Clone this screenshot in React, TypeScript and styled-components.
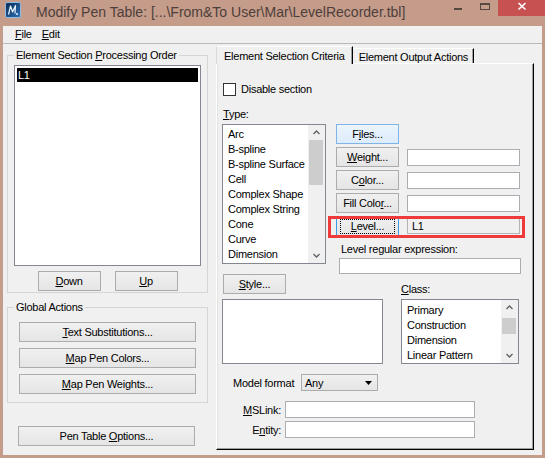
import React from 'react';
import styled, { createGlobalStyle } from 'styled-components';

const GlobalStyle = createGlobalStyle`
  html, body { margin: 0; padding: 0; }
  body {
    font-family: "Liberation Sans", Arial, sans-serif;
    font-size: 11px;
    letter-spacing: -0.25px;
    color: #000;
    background: #fff;
  }
  * { box-sizing: border-box; }
`;

const Window = styled.div`
  width: 545px;
  height: 458px;
  background: #c59b8a;
  display: flex;
  flex-direction: column;
  overflow: hidden;
`;

const TitleBar = styled.div`
  height: 26px;
  flex: none;
  display: flex;
  align-items: flex-start;
`;

const AppIcon = styled.svg`
  margin: 2px 0 0 5px;
  flex: none;
`;

const Caption = styled.div`
  margin: 2px 0 0 15px;
  font-size: 14px;
  line-height: 20px;
  letter-spacing: 0;
  color: #4d3f3a;
  white-space: nowrap;
`;

const CaptionButtons = styled.div`
  margin-left: auto;
  display: flex;
`;

const CaptionButton = styled.div<{ $w: number; $close?: boolean }>`
  width: ${p => p.$w}px;
  height: 16px;
  display: flex;
  justify-content: center;
  padding-top: 1px;
  background: ${p => (p.$close ? '#c75050' : 'transparent')};
`;

const Client = styled.div`
  flex: 1;
  min-height: 0;
  margin: 0 3px 3px;
  background: #f0f0f0;
  display: flex;
  flex-direction: column;
`;

const MenuBar = styled.div`
  height: 18px;
  flex: none;
  display: flex;
  padding-left: 10px;
  border-bottom: 1px solid #b9b9b9;
`;

const MenuItem = styled.span`
  padding: 0 2px;
  margin-right: 6px;
  line-height: 17px;
`;

const Body = styled.div`
  flex: 1;
  min-height: 0;
  display: flex;
  padding-left: 4px;
`;

const LeftColumn = styled.div`
  width: 201px;
  flex: none;
  display: flex;
  flex-direction: column;
  padding-top: 4px;
`;

const GroupBox = styled.fieldset<{ $pt: number; $pb: number; $mt?: number }>`
  margin: ${p => p.$mt ?? 0}px 0 0;
  padding: ${p => p.$pt}px 6px ${p => p.$pb}px;
  border: 1px solid #d5d5d5;
  min-width: 0;
  display: flex;
  flex-direction: column;
`;

const Legend = styled.legend`
  padding: 0 2px;
  line-height: 14px;
`;

const Box = styled.div<{ $w?: number; $h: number }>`
  width: ${p => (p.$w ? `${p.$w}px` : 'auto')};
  height: ${p => p.$h}px;
  flex: none;
  border: 1px solid #828790;
  background: #fff;
  display: flex;
  overflow: hidden;
`;

const SectionItems = styled.div`
  flex: 1;
  padding: 2px;
`;

const SelectedItem = styled.div`
  background: #000;
  color: #fff;
  line-height: 14px;
  padding-left: 1px;
`;

const ButtonRow = styled.div`
  display: flex;
  justify-content: center;
  gap: 14px;
  margin-top: 5px;
`;

const ButtonStack = styled.div`
  display: flex;
  flex-direction: column;
  align-items: center;
  gap: 6px;
`;

const Btn = styled.button<{ $w?: number; $variant?: 'hot' | 'focus' }>`
  position: relative;
  width: ${p => p.$w ?? 63}px;
  height: 20px;
  flex: none;
  padding: 0;
  margin: 0;
  font: inherit;
  letter-spacing: inherit;
  color: #000;
  border: 1px solid
    ${p => (p.$variant === 'hot' ? '#7eb4ea' : p.$variant === 'focus' ? '#3c9be0' : '#acacac')};
  background: ${p =>
    p.$variant === 'hot'
      ? 'linear-gradient(#ecf4fc, #dcecfc)'
      : 'linear-gradient(#f0f0f0, #e5e5e5)'};
  line-height: 18px;
  text-align: center;
  white-space: nowrap;

  ${p =>
    p.$variant === 'focus' &&
    `
    &::after {
      content: '';
      position: absolute;
      inset: 2px 3px 1px 3px;
      border: 1px dotted #000;
    }
  `}
`;

const WideButton = styled(Btn)`
  margin: 23px 0 0 11px;
`;

const TabControl = styled.div`
  width: 318px;
  flex: none;
  margin: 2px 0 5px 8px;
  display: flex;
  flex-direction: column;
`;

const TabStrip = styled.div`
  height: 17px;
  flex: none;
  display: flex;
  align-items: flex-end;
`;

const Tab = styled.div<{ $active?: boolean }>`
  position: relative;
  z-index: ${p => (p.$active ? 1 : 0)};
  height: ${p => (p.$active ? 18 : 15)}px;
  margin-bottom: ${p => (p.$active ? -1 : 0)}px;
  padding: 0 ${p => (p.$active ? 7 : 5)}px;
  border-top: 1px solid #fff;
  border-left: 1px solid ${p => (p.$active ? '#d9d9d9' : '#f0f0f0')};
  border-right: 1px solid #000;
  box-shadow: inset -1px 0 #a0a0a0;
  background: #f0f0f0;
  line-height: ${p => (p.$active ? 18 : 17)}px;
  white-space: nowrap;
`;

const Panel = styled.div`
  flex: 1;
  min-height: 0;
  border-top: 1px solid #fff;
  border-left: 1px solid #fff;
  border-right: 1px solid #000;
  border-bottom: 1px solid #000;
  box-shadow: inset -1px -1px #a0a0a0, inset 1px 0 #e3e3e3;
  padding: 19px 0 0 5px;
  display: flex;
  flex-direction: column;
  align-items: flex-start;
`;

const CheckRow = styled.label`
  display: flex;
  align-items: center;
  gap: 5px;
  margin-left: 1px;
  line-height: 13px;
`;

const CheckBox = styled.span`
  width: 13px;
  height: 13px;
  border: 1px solid #333;
  background: #fff;
`;

const TypeLabel = styled.div`
  line-height: 14px;
  margin: 11px 0 3px 1px;
`;

const MainGrid = styled.div`
  display: flex;
  align-items: flex-start;
  gap: 10px;
`;

const ListItems = styled.div`
  flex: 1;
  padding-top: 2px;
`;

const ListItem = styled.div`
  line-height: 15px;
  padding-left: 5px;
  white-space: nowrap;
`;

const ScrollBar = styled.div`
  width: 17px;
  flex: none;
  display: flex;
  flex-direction: column;
  background: #f0f0f0;
`;

const ScrollArrow = styled.div`
  height: 15px;
  flex: none;
  display: flex;
  align-items: center;
  justify-content: center;
`;

const ScrollTrack = styled.div<{ $offset: number }>`
  flex: 1;
  padding: ${p => p.$offset}px 2px 0 1px;
`;

const ScrollThumb = styled.div<{ $h: number }>`
  height: ${p => p.$h}px;
  background: #cdcdcd;
`;

const RightArea = styled.div`
  width: 185px;
  display: flex;
  flex-direction: column;
`;

const ActionRow = styled.div<{ $highlight?: boolean }>`
  position: relative;
  height: 20px;
  display: flex;
  align-items: center;
  gap: 8px;
  margin-bottom: ${p => (p.$highlight ? 0 : 3)}px;

  ${p =>
    p.$highlight &&
    `
    &::after {
      content: '';
      position: absolute;
      left: -8px;
      right: -4px;
      top: 0;
      bottom: -2px;
      border: 3px solid #ee3a3a;
      pointer-events: none;
    }
  `}
`;

const Field = styled.div<{ $w: number; $h?: number; $readonly?: boolean }>`
  width: ${p => p.$w}px;
  height: ${p => p.$h ?? 17}px;
  flex: none;
  border: 1px solid ${p => (p.$readonly ? '#b4b4b4' : '#abadb3')};
  background: ${p => (p.$readonly ? '#f0f0f0' : '#fff')};
  padding-left: 4px;
  line-height: 14px;
`;

const RegexLabel = styled.div`
  line-height: 14px;
  margin: 6px 0 0 5px;
`;

const RegexField = styled(Field)`
  margin: 2px 0 0 3px;
`;

const StyleSection = styled.div`
  display: grid;
  grid-template-columns: 161px 118px;
  grid-template-rows: 25px 65px;
  column-gap: 18px;
`;

const StyleButton = styled(Btn)`
  margin-left: 1px;
  align-self: start;
`;

const ClassLabel = styled.div`
  align-self: end;
  margin-bottom: 3px;
  line-height: 14px;
`;

const ModelRow = styled.div`
  display: flex;
  align-items: center;
  margin: 10px 0 0 11px;
`;

const ModelLabel = styled.span`
  width: 68px;
  line-height: 14px;
`;

const Dropdown = styled.div`
  width: 77px;
  height: 17px;
  border: 1px solid #acacac;
  background: linear-gradient(#f0f0f0, #e5e5e5);
  display: flex;
  align-items: center;
  justify-content: space-between;
  padding: 0 5px 0 3px;
  line-height: 14px;
`;

const FieldRow = styled.div<{ $mt: number }>`
  display: flex;
  align-items: center;
  gap: 4px;
  margin-top: ${p => p.$mt}px;
`;

const FieldLabel = styled.span`
  width: 59px;
  text-align: right;
  line-height: 14px;
`;

const Chevron = ({ down }: { down?: boolean }) => (
  <svg width="7" height="5" viewBox="0 0 7 5">
    <polyline
      points={down ? '0.5,1 3.5,4 6.5,1' : '0.5,4 3.5,1 6.5,4'}
      fill="none"
      stroke="#606060"
      strokeWidth="1.3"
    />
  </svg>
);

const Scroll = ({ offset, thumb }: { offset: number; thumb: number }) => (
  <ScrollBar>
    <ScrollArrow>
      <Chevron />
    </ScrollArrow>
    <ScrollTrack $offset={offset}>
      <ScrollThumb $h={thumb} />
    </ScrollTrack>
    <ScrollArrow>
      <Chevron down />
    </ScrollArrow>
  </ScrollBar>
);

const types = [
  'Arc',
  'B-spline',
  'B-spline Surface',
  'Cell',
  'Complex Shape',
  'Complex String',
  'Cone',
  'Curve',
  'Dimension',
];

const classes = ['Primary', 'Construction', 'Dimension', 'Linear Pattern'];

const App = () => {
  return (
    <>
      <GlobalStyle />
      <Window>
        <TitleBar>
          <AppIcon width="16" height="16" viewBox="0 0 16 16">
            <defs>
              <linearGradient id="ms" x1="0" y1="0" x2="1" y2="1">
                <stop offset="0" stopColor="#0a2a52" />
                <stop offset="1" stopColor="#2c72b8" />
              </linearGradient>
            </defs>
            <rect x="0.5" y="0.5" width="15" height="15" rx="1.5" fill="url(#ms)" stroke="#8dbbe3" />
            <path
              d="M3.5 12.5 L5.5 4 L7.6 10 L10.5 3.5 L10 11.5"
              fill="none"
              stroke="#e8f2fc"
              strokeWidth="1.2"
              strokeLinejoin="round"
            />
            <circle cx="12" cy="12" r="1" fill="#e8f2fc" />
          </AppIcon>
          <Caption>Modify Pen Table: [...\From&amp;To User\Mar\LevelRecorder.tbl]</Caption>
          <CaptionButtons>
            <CaptionButton $w={26}>
              <svg width="12" height="12" viewBox="0 0 12 12">
                <rect x="2" y="7" width="8" height="2" fill="#5a4842" />
              </svg>
            </CaptionButton>
            <CaptionButton $w={27}>
              <svg width="12" height="12" viewBox="0 0 12 12">
                <rect x="1.5" y="2.5" width="9" height="6" fill="none" stroke="#5a4842" />
                <line x1="1.5" y1="3.5" x2="10.5" y2="3.5" stroke="#5a4842" />
              </svg>
            </CaptionButton>
            <CaptionButton $w={47} $close>
              <svg width="12" height="12" viewBox="0 0 12 12">
                <path d="M2.5 2 L9.5 8.5 M9.5 2 L2.5 8.5" stroke="#fff" strokeWidth="1.7" />
              </svg>
            </CaptionButton>
          </CaptionButtons>
        </TitleBar>

        <Client>
          <MenuBar>
            <MenuItem>
              <u>F</u>ile
            </MenuItem>
            <MenuItem>
              <u>E</u>dit
            </MenuItem>
          </MenuBar>

          <Body>
            <LeftColumn>
              <GroupBox $pt={3} $pb={1}>
                <Legend>
                  Element Section <u>P</u>rocessing Order
                </Legend>
                <Box $h={201}>
                  <SectionItems>
                    <SelectedItem>L1</SelectedItem>
                  </SectionItems>
                </Box>
                <ButtonRow>
                  <Btn>
                    <u>D</u>own
                  </Btn>
                  <Btn>
                    <u>U</u>p
                  </Btn>
                </ButtonRow>
              </GroupBox>

              <GroupBox $pt={8} $pb={8} $mt={7}>
                <Legend>Global Actions</Legend>
                <ButtonStack>
                  <Btn $w={177}>
                    <u>T</u>ext Substitutions...
                  </Btn>
                  <Btn $w={177}>
                    <u>M</u>ap Pen Colors...
                  </Btn>
                  <Btn $w={177}>
                    <u>M</u>ap Pen Weights...
                  </Btn>
                </ButtonStack>
              </GroupBox>

              <WideButton $w={177}>
                Pen Table <u>O</u>ptions...
              </WideButton>
            </LeftColumn>

            <TabControl>
              <TabStrip>
                <Tab $active>Element Selection Criteria</Tab>
                <Tab>Element Output Actions</Tab>
              </TabStrip>
              <Panel>
                <CheckRow>
                  <CheckBox />
                  Disable section
                </CheckRow>

                <TypeLabel>
                  <u>T</u>ype:
                </TypeLabel>

                <MainGrid>
                  <Box $w={104} $h={140}>
                    <ListItems>
                      {types.map(t => (
                        <ListItem key={t}>{t}</ListItem>
                      ))}
                    </ListItems>
                    <Scroll offset={0} thumb={45} />
                  </Box>

                  <RightArea>
                    <ActionRow>
                      <Btn $variant="hot">
                        F<u>i</u>les...
                      </Btn>
                    </ActionRow>
                    <ActionRow>
                      <Btn>
                        <u>W</u>eight...
                      </Btn>
                      <Field $w={113} />
                    </ActionRow>
                    <ActionRow>
                      <Btn>
                        C<u>o</u>lor...
                      </Btn>
                      <Field $w={113} />
                    </ActionRow>
                    <ActionRow>
                      <Btn>
                        Fill Colo<u>r</u>...
                      </Btn>
                      <Field $w={113} />
                    </ActionRow>
                    <ActionRow $highlight>
                      <Btn $variant="focus">
                        <u>L</u>evel...
                      </Btn>
                      <Field $w={113} $h={16} $readonly>
                        L1
                      </Field>
                    </ActionRow>
                    <RegexLabel>Level regular expression:</RegexLabel>
                    <RegexField $w={182} $h={16} />
                  </RightArea>
                </MainGrid>

                <StyleSection>
                  <StyleButton>
                    <u>S</u>tyle...
                  </StyleButton>
                  <ClassLabel>
                    <u>C</u>lass:
                  </ClassLabel>
                  <Box $w={161} $h={65} />
                  <Box $w={118} $h={65}>
                    <ListItems style={{ paddingTop: 3 }}>
                      {classes.map(c => (
                        <ListItem key={c}>{c}</ListItem>
                      ))}
                    </ListItems>
                    <Scroll offset={3} thumb={16} />
                  </Box>
                </StyleSection>

                <ModelRow>
                  <ModelLabel>Model format</ModelLabel>
                  <Dropdown>
                    Any
                    <svg width="7" height="4" viewBox="0 0 7 4">
                      <polygon points="0,0 7,0 3.5,4" fill="#000" />
                    </svg>
                  </Dropdown>
                </ModelRow>

                <FieldRow $mt={10}>
                  <FieldLabel>
                    <u>M</u>SLink:
                  </FieldLabel>
                  <Field $w={190} />
                </FieldRow>
                <FieldRow $mt={3}>
                  <FieldLabel>
                    E<u>n</u>tity:
                  </FieldLabel>
                  <Field $w={190} />
                </FieldRow>
              </Panel>
            </TabControl>
          </Body>
        </Client>
      </Window>
    </>
  );
};

export default App;
